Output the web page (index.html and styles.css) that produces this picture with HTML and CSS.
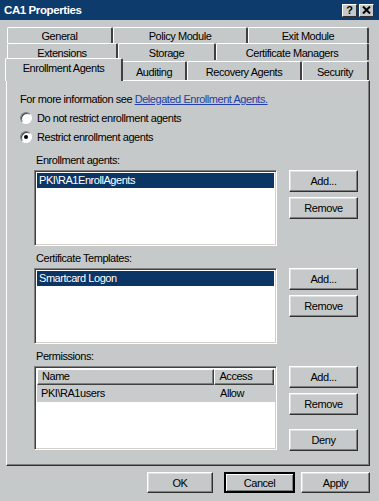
FILE: index.html
```html
<!DOCTYPE html>
<html>
<head>
<meta charset="utf-8">
<link rel="stylesheet" href="styles.css">
</head>
<body>
<div class="window">
  <div class="titlebar">
    <span class="title">CA1 Properties</span>
    <div class="tbtns">
      <span class="tbtn q">?</span>
      <span class="tbtn"><svg width="9" height="8" viewBox="0 0 9 8"><path d="M1 0.5 L8 7.5 M8 0.5 L1 7.5" stroke="#000" stroke-width="2"/></svg></span>
    </div>
  </div>
  <div class="tabs">
    <div class="tabrow r1">
      <div class="tab t-general">General</div>
      <div class="tab t-policy">Policy Module</div>
      <div class="tab t-exit">Exit Module</div>
    </div>
    <div class="tabrow r2">
      <div class="tab t-ext">Extensions</div>
      <div class="tab t-storage">Storage</div>
      <div class="tab t-certmgr">Certificate Managers</div>
    </div>
    <div class="tabrow r3">
      <div class="tab sel t-enroll">Enrollment Agents</div>
      <div class="tab t-audit">Auditing</div>
      <div class="tab t-recovery">Recovery Agents</div>
      <div class="tab t-security">Security</div>
    </div>
  </div>
  <div class="panel">
    <div class="info">For more information see <span class="link">Delegated Enrollment Agents.</span></div>
    <div class="radio-row r-first"><span class="radio"></span><span>Do not restrict enrollment agents</span></div>
    <div class="radio-row r-second"><span class="radio on"></span><span>Restrict enrollment agents</span></div>

    <div class="section s1">
      <div class="label">Enrollment agents:</div>
      <div class="row">
        <div class="list l1"><div class="item selected">PKI\RA1EnrollAgents</div></div>
        <div class="btncol">
          <div class="btn side">Add...</div>
          <div class="btn side">Remove</div>
        </div>
      </div>
    </div>

    <div class="section s2">
      <div class="label">Certificate Templates:</div>
      <div class="row">
        <div class="list l2"><div class="item selected">Smartcard Logon</div></div>
        <div class="btncol">
          <div class="btn side">Add...</div>
          <div class="btn side">Remove</div>
        </div>
      </div>
    </div>

    <div class="section s3">
      <div class="label">Permissions:</div>
      <div class="row">
        <div class="list l3">
          <div class="header">
            <div class="hcell c-name">Name</div>
            <div class="hcell c-access">Access</div>
          </div>
          <div class="prow">
            <div class="pcell c-name">PKI\RA1users</div>
            <div class="pcell c-access">Allow</div>
          </div>
        </div>
        <div class="btncol">
          <div class="btn side">Add...</div>
          <div class="btn side">Remove</div>
          <div class="btn side deny">Deny</div>
        </div>
      </div>
    </div>
  </div>
  <div class="footer">
    <div class="btn b-ok">OK</div>
    <div class="btn b-cancel">Cancel</div>
    <div class="btn b-apply">Apply</div>
  </div>
</div>
</body>
</html>
```

FILE: styles.css
```css
* { box-sizing: border-box; }
html, body { margin: 0; padding: 0; }
body {
  background: #c5c9c9;
  font-family: "Liberation Sans", Arial, sans-serif;
  font-size: 11px;
  letter-spacing: -0.45px;
  color: #000;
}
.window {
  width: 379px;
  height: 501px;
  background: #c5c9c9;
  overflow: hidden;
}
.titlebar {
  height: 20px;
  background: #0d3b6b;
  display: flex;
  align-items: center;
  justify-content: space-between;
  padding: 0 5px 0 4px;
}
.title {
  color: #fff;
  font-weight: bold;
  font-size: 11.5px;
  letter-spacing: -0.4px;
}
.tbtns { display: flex; gap: 2px; }
.tbtn {
  width: 15px;
  height: 13px;
  background: #c5c9c9;
  border: 1px solid;
  border-color: #fff #303030 #303030 #fff;
  display: flex;
  align-items: center;
  justify-content: center;
  font-weight: bold;
  font-size: 11px;
  letter-spacing: 0;
  line-height: 1;
}

/* tabs */
.tabs {
  padding: 7px 0 0 7px;
}
.tabrow {
  display: flex;
  position: relative;
}
.r1 { height: 16px; }
.r2 { height: 17px; }
.r3 { height: 19px; margin-top: 1px; }
.tab {
  height: 100%;
  border-top: 1px solid #fff;
  border-left: 1px solid #fff;
  border-right: 2px solid #404040;
  border-radius: 2px 2px 0 0;
  display: flex;
  align-items: center;
  justify-content: center;
  white-space: nowrap;
  padding-top: 1px;
}
.t-general { width: 106px; }
.t-policy { width: 135px; }
.t-exit { width: 121px; }
.t-ext { width: 111px; }
.t-storage { width: 98px; }
.t-certmgr { width: 153px; }
.t-enroll { width: 115px; }
.t-audit { width: 65px; }
.t-recovery { width: 115px; }
.t-security { width: 67px; }
.tab.sel {
  position: relative;
  z-index: 2;
  height: 23px;
  margin-top: -3px;
  margin-left: -2px;
  margin-right: -1px;
  width: 118px;
  background: #c5c9c9;
  border-right: 2px solid #404040;
  align-items: flex-start;
  padding-top: 3px;
}

/* panel */
.panel {
  margin: 0 9px 0 6px;
  height: 386px;
  border-top: 1px solid #fff;
  border-left: 1px solid #fff;
  border-right: 1px solid #303030;
  border-bottom: 1px solid #303030;
  box-shadow: inset -1px -1px 0 #808080;
  padding: 12px 0 0 13px;
  position: relative;
  z-index: 1;
}
.info {
  height: 13px;
  line-height: 13px;
}
.link { color: #2440a8; text-decoration: underline; }
.radio-row {
  display: flex;
  align-items: center;
  gap: 5px;
  height: 14px;
}
.r-first { margin-top: 5px; }
.r-second { margin-top: 5px; }
.radio {
  width: 12px;
  height: 12px;
  border-radius: 50%;
  background: #fff;
  border: 1px solid;
  border-color: #808080 #fff #fff #808080;
  box-shadow: inset 1px 1px 0 #404040;
  position: relative;
  flex: none;
}
.radio.on::after {
  content: "";
  position: absolute;
  width: 4px;
  height: 4px;
  border-radius: 50%;
  background: #000;
  left: 3px;
  top: 3px;
}
.section { padding-left: 16px; }
.s1 { margin-top: 10px; }
.s2 { margin-top: 6px; }
.s3 { margin-top: 6px; }
.label {
  height: 13px;
  line-height: 13px;
  margin-bottom: 3px;
}
.row {
  display: flex;
  gap: 12px;
}
.list {
  width: 243px;
  margin-left: -2px;
  background: #fff;
  border: 1px solid;
  border-color: #808080 #fff #fff #808080;
  box-shadow: inset 1px 1px 0 #404040, inset -1px -1px 0 #d4d0c8;
  padding: 2px;
}
.l1 { height: 76px; }
.l2 { height: 76px; }
.l3 { height: 84px; }
.item {
  height: 15px;
  line-height: 15px;
  padding-left: 2px;
}
.item.selected { background: #0b3564; color: #fff; }
.header { display: flex; height: 16px; }
.hcell {
  background: #c5c9c9;
  border: 1px solid;
  border-color: #fff #404040 #404040 #fff;
  box-shadow: inset -1px -1px 0 #808080;
  line-height: 13px;
  padding-left: 4px;
}
.c-name { width: 179px; }
.c-access { width: 60px; }
.prow {
  display: flex;
  height: 17px;
  background: #c8cccc;
  width: 239px;
}
.pcell { line-height: 16px; padding-left: 4px; }
.btncol {
  display: flex;
  flex-direction: column;
  gap: 5px;
}
.btn {
  background: #c5c9c9;
  border: 1px solid;
  border-color: #fff #303030 #303030 #fff;
  box-shadow: inset -1px -1px 0 #808080, inset 1px 1px 0 #e0e0e0;
  display: flex;
  align-items: center;
  justify-content: center;
}
.btn.side { width: 69px; height: 22px; }
.btn.deny { margin-top: 9px; }
.footer {
  display: flex;
  justify-content: flex-end;
  padding: 6px 9px 0 0;
}
.footer .btn { height: 21px; }
.b-ok { width: 66px; margin-right: 11px; }
.b-cancel {
  width: 71px;
  margin-right: 6px;
  border: 2px solid #000;
  box-shadow: inset 1px 1px 0 #fff, inset -1px -1px 0 #808080;
}
.b-apply { width: 69px; }
```
